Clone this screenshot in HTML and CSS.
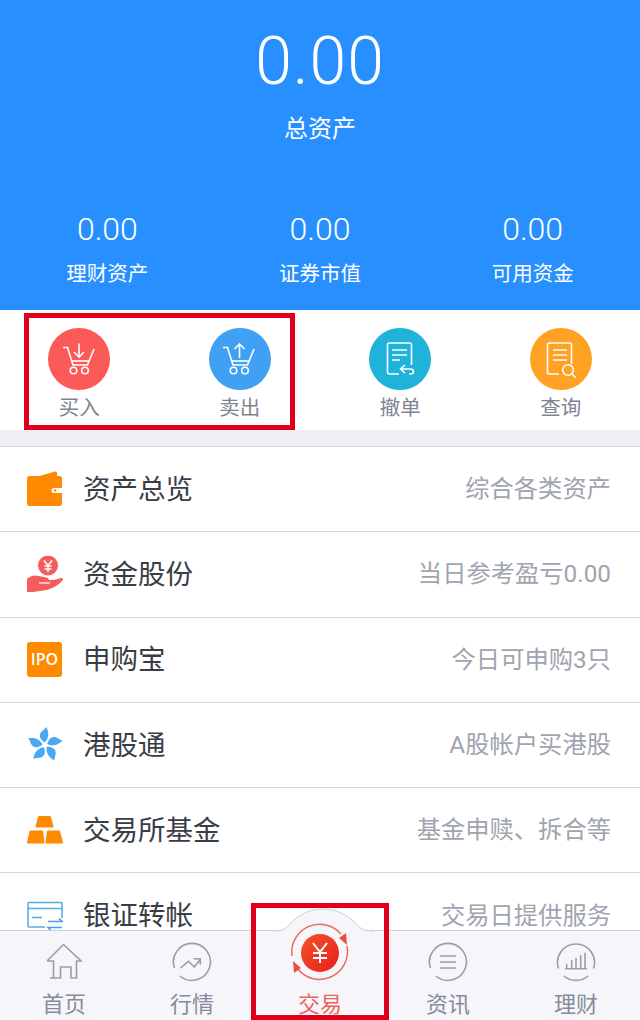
FILE: index.html
```html
<!DOCTYPE html>
<html lang="zh-CN">
<head>
  <meta charset="UTF-8">
  <title>交易</title>
  <link rel="stylesheet" href="styles.css">
</head>
<body>
  <div class="page">
    <header class="summary">
      <div class="total">0.00</div>
      <div class="total-label">总资产</div>
      <div class="stats">
        <div class="stat"><div class="stat-num">0.00</div><div class="stat-label">理财资产</div></div>
        <div class="stat"><div class="stat-num">0.00</div><div class="stat-label">证券市值</div></div>
        <div class="stat"><div class="stat-num">0.00</div><div class="stat-label">可用资金</div></div>
      </div>
    </header>

    <nav class="actions">
      <div class="action">
        <div class="circle red">
          <svg viewBox="0 0 62 62" class="line-white">
            <path d="M15 19.500h4.500L25 37h14.500L46 21"/>
            <path d="M24 33h17"/>
            <circle cx="25.500" cy="42.500" r="3.300"/>
            <circle cx="37" cy="42.500" r="3.300"/>
            <path d="M31 15.500v13M26 24l5 5 5-5"/>
          </svg>
        </div>
        <span>买入</span>
      </div>
      <div class="action">
        <div class="circle blue">
          <svg viewBox="0 0 62 62" class="line-white">
            <path d="M14 19.500h4.500L24 37h14.500L45 21"/>
            <path d="M23 33h17"/>
            <circle cx="24.500" cy="42.500" r="3.300"/>
            <circle cx="36" cy="42.500" r="3.300"/>
            <path d="M30.500 30V16M25.500 21l5-5 5 5"/>
          </svg>
        </div>
        <span>卖出</span>
      </div>
      <div class="action">
        <div class="circle teal">
          <svg viewBox="0 0 62 62" class="line-white">
            <path d="M30 46H20.500q-2 0-2-2V17q0-2 2-2h20q2 0 2 2v20"/>
            <path d="M23 22h15M23 27h15M23 32h8"/>
            <path d="M36 37l-4.500 4 4.500 4M32 41h9q3.500 0 3.500 2.500T41 46h-1"/>
          </svg>
        </div>
        <span>撤单</span>
      </div>
      <div class="action">
        <div class="circle amber">
          <svg viewBox="0 0 62 62" class="line-white">
            <path d="M29 46h-9.500q-2 0-2-2V17q0-2 2-2h20q2 0 2 2v19"/>
            <path d="M23 22h14M23 27h14M23 32h14"/>
            <circle cx="38" cy="42" r="5.300"/>
            <path d="M42 46l3.500 3.500"/>
          </svg>
        </div>
        <span>查询</span>
      </div>
    </nav>

    <main class="list">
      <div class="row">
        <svg class="row-icon" viewBox="0 0 36 36">
          <path fill="#ff8a00" d="M9 6 28 0.500q2-.5 2 1.500V6z"/>
          <rect fill="#ff8a00" x="0" y="5" width="35" height="30" rx="2.500"/>
          <path fill="#fff" d="M27 17h8v5h-8q-2.500 0-2.500-2.500T27 17z"/>
          <circle fill="#ff8a00" cx="28" cy="19.500" r="1.300"/>
        </svg>
        <span class="row-title">资产总览</span><span class="row-note">综合各类资产</span>
      </div>
      <div class="row">
        <svg class="row-icon" viewBox="0 0 36 36">
          <circle fill="#f45d5d" cx="21" cy="9.500" r="10"/>
          <path fill="none" stroke="#fff" stroke-width="1.500" d="M17 4.500l4 5 4-5M21 9.500V16M17.500 10h7M17.500 13h7"/>
          <path fill="#f45d5d" d="M0 23q4-4 9-3.500l8 1.500q5 0.500 5 3h5l7-2q3 0 1.500 2.500Q30 31 20 34L6 36H0z"/>
          <path fill="none" stroke="#fff" stroke-width="1.200" d="M12 27h11"/>
        </svg>
        <span class="row-title">资金股份</span><span class="row-note">当日参考盈亏0.00</span>
      </div>
      <div class="row">
        <div class="ipo">IPO</div>
        <span class="row-title">申购宝</span><span class="row-note">今日可申购3只</span>
      </div>
      <div class="row">
        <svg class="row-icon" viewBox="0 0 36 36">
          <g fill="#4aa9f2">
            <path id="petal" d="M17.500 15.500C14 13 11.500 9.500 13.500 6c1.500-2.500 4-3.500 6-6 1 3 2.500 6 1.500 9.500-.5 2.500-1.500 4.500-3.500 6z"/>
            <use href="#petal" transform="rotate(72 18 18)"/>
            <use href="#petal" transform="rotate(144 18 18)"/>
            <use href="#petal" transform="rotate(216 18 18)"/>
            <use href="#petal" transform="rotate(288 18 18)"/>
          </g>
        </svg>
        <span class="row-title">港股通</span><span class="row-note">A股帐户买港股</span>
      </div>
      <div class="row">
        <svg class="row-icon" viewBox="0 0 36 36">
          <g fill="#ff8a00" stroke="#ff8a00" stroke-width="2" stroke-linejoin="round">
            <path d="M12 5h11l2.500 9.500h-16z"/>
            <path d="M3.500 19.500h11.500l1.500 11H1z"/>
            <path d="M21 19.500h11l3 11H19.500z"/>
          </g>
        </svg>
        <span class="row-title">交易所基金</span><span class="row-note">基金申赎、拆合等</span>
      </div>
      <div class="row">
        <svg class="row-icon" viewBox="0 0 36 36">
          <g fill="none" stroke="#56aee0" stroke-width="1.600">
            <path d="M18 29H2q-1 0-1-1V5.500q0-1 1-1h32q1 0 1 1V20"/>
            <path d="M1 10.500h34M5 19.500h10"/>
            <path d="M21 23.500h14l-3-3M35 29.500H21l3 3" stroke="#4a9de8"/>
          </g>
        </svg>
        <span class="row-title">银证转帐</span><span class="row-note">交易日提供服务</span>
      </div>
    </main>

    <footer class="tabbar">
      <div class="tab">
        <svg viewBox="0 0 40 40" class="tab-icon">
          <path d="M3 19 19.500 2.500 37 19h-4.500v17H27V25H16.500v11H6M9.500 36V19H3"/>
        </svg>
        <span>首页</span>
      </div>
      <div class="tab">
        <svg viewBox="0 0 40 40" class="tab-icon">
          <path d="M8 34A18.500 18.500 0 1 0 2.500 26"/>
          <path d="M8.500 26l8-6.700 5.800 5.700 6-7.700M21.700 16.700h6.600v6"/>
        </svg>
        <span>行情</span>
      </div>
      <div class="tab active">
        <svg class="hump" viewBox="0 0 100 24">
          <path d="M0 23c12 0 13-3 21-11C30 4 40 1 50 1s20 3 29 11 9 11 21 11v2H0z"/>
        </svg>
        <svg viewBox="0 0 60 60" class="trade-icon">
          <defs>
            <linearGradient id="disc" x1="0" y1="0" x2="1" y2="1">
              <stop offset="0" stop-color="#f5502a"/>
              <stop offset="1" stop-color="#e8201c"/>
            </linearGradient>
          </defs>
          <circle cx="30" cy="30" r="19" fill="url(#disc)"/>
          <path d="M23 20l7 9 7-9M30 29v11M23 30h14M23 35h14" fill="none" stroke="#fff" stroke-width="2"/>
          <path d="M2 33A28 28 0 0 1 51 11" fill="none" stroke="#ea6a5e" stroke-width="1.500"/>
          <path d="M57 23A28 28 0 0 1 7 45" fill="none" stroke="#ea6a5e" stroke-width="1.500"/>
          <path d="M49 15l7-5 1 12z" fill="#e8503f"/>
          <path d="M11 45l-7 5-1-12z" fill="#e8503f"/>
        </svg>
        <span>交易</span>
      </div>
      <div class="tab">
        <svg viewBox="0 0 40 40" class="tab-icon">
          <path d="M8 34A18.500 18.500 0 1 0 2.500 26"/>
          <path d="M12 14h16M12 20h16M12 26h16"/>
        </svg>
        <span>资讯</span>
      </div>
      <div class="tab">
        <svg viewBox="0 0 40 40" class="tab-icon">
          <path d="M2.500 26.500a18.500 18.500 0 1 1 35 0"/>
          <path d="M8 34a18.500 18.500 0 0 0 24 0"/>
          <path d="M9 26.700h22M10.700 26.700v-5M15.700 26.700V18.300M20 26.700V16M24.700 26.700V13.300M29 26.700V10.700"/>
        </svg>
        <span>理财</span>
      </div>
    </footer>

    <div class="mark mark-actions"></div>
    <div class="mark mark-trade"></div>
  </div>
</body>
</html>
```

FILE: styles.css
```css
* {
  box-sizing: border-box;
}

body {
  margin: 0;
  font-family: "Noto Sans CJK SC", "Noto Sans", sans-serif;
  background-color: #fff;
}

.page {
  position: relative;
  width: 640px;
  height: 1020px;
  display: flex;
  flex-direction: column;
  overflow: hidden;
}

/* top blue block */
.summary {
  height: 310px;
  flex: none;
  padding-top: 24px;
  background-color: #288fff;
  color: #fff;
  text-align: center;
}

.total {
  font-family: Roboto, sans-serif;
  font-weight: 300;
  font-size: 66px;
  letter-spacing: 1px;
  line-height: 76px;
}

.total-label {
  margin-top: 9px;
  font-size: 24px;
  line-height: 36px;
}

.stats {
  display: grid;
  grid-template-columns: repeat(3, 1fr);
  margin-top: 66px;
  padding: 0 1px;
}

.stat-num {
  font-family: Roboto, sans-serif;
  font-weight: 300;
  font-size: 32px;
  line-height: 36px;
}

.stat-label {
  margin-top: 10px;
  font-size: 20.500px;
  line-height: 30px;
}

/* four round buttons */
.actions {
  width: 642px;
  height: 120px;
  flex: none;
  display: grid;
  grid-template-columns: repeat(4, 1fr);
  margin-left: -1px;
  padding-top: 18px;
  background-color: #fff;
}

.action {
  display: flex;
  flex-direction: column;
  align-items: center;
  font-size: 20.500px;
  line-height: 24px;
  color: #80848f;
}

.action span {
  margin-top: 4px;
}

.circle {
  width: 62px;
  height: 62px;
  border-radius: 50%;
}

.circle svg {
  display: block;
  width: 62px;
  height: 62px;
}

.red { background-color: #fb5a57; }
.blue { background-color: #40a0f4; }
.teal { background-color: #1fb2da; }
.amber { background-color: #ffa224; }

.line-white {
  fill: none;
  stroke: #fff;
  stroke-width: 1.600;
}

/* rows */
.list {
  flex: 1;
  min-height: 0;
  overflow: hidden;
  margin-top: 16px;
  border-top: 1px solid #d9d9dd;
  box-shadow: 0 -16px 0 #efeff3;
}

.row {
  height: 85.300px;
  display: flex;
  align-items: center;
  padding: 0 29px 0 27px;
  border-bottom: 1px solid #d6d6da;
  background-color: #fff;
}

.row-icon {
  width: 36px;
  height: 36px;
  flex: none;
}

.ipo {
  width: 35px;
  height: 35px;
  flex: none;
  border-radius: 3px;
  background-color: #ff8a00;
  color: #fff;
  font-family: "Open Sans", sans-serif;
  font-size: 16px;
  font-weight: 600;
  line-height: 35px;
  text-align: center;
}

.ipo + .row-title {
  margin-left: 21px;
}

.row-title {
  margin-left: 20px;
  margin-bottom: 5px;
  font-size: 27.500px;
  color: #3a3d45;
}

.row-note {
  margin-left: auto;
  margin-bottom: 5px;
  font-family: Roboto, "Noto Sans CJK SC", sans-serif;
  font-size: 24.300px;
  color: #a0a4ae;
}

/* bottom tabs */
.tabbar {
  position: relative;
  height: 90px;
  flex: none;
  display: grid;
  grid-template-columns: repeat(5, 1fr);
  padding-top: 11px;
  border-top: 1px solid #cfcfd4;
  background-color: #f6f6fa;
}

.tab {
  position: relative;
  display: flex;
  flex-direction: column;
  align-items: center;
  font-size: 22px;
  line-height: 32px;
  color: #858b9a;
}

.tab-icon {
  width: 40px;
  height: 40px;
  margin-bottom: 4px;
  fill: none;
  stroke: #9c9ea5;
  stroke-width: 1.600;
}

.active {
  color: #e9665c;
}

.hump {
  position: absolute;
  top: -34px;
  left: 17px;
  width: 100px;
  height: 24px;
  fill: #f6f6fa;
  stroke: #cfcfd4;
  stroke-width: 1;
}

.trade-icon {
  position: relative;
  width: 60px;
  height: 60px;
  margin-top: -19px;
  margin-bottom: 3px;
}

/* red highlight boxes drawn over the screenshot */
.mark {
  position: absolute;
  border: 5px solid #e0001b;
}

.mark-actions {
  left: 24px;
  top: 313px;
  width: 271px;
  height: 117px;
}

.mark-trade {
  left: 251px;
  top: 903px;
  width: 138px;
  height: 117px;
}
```
